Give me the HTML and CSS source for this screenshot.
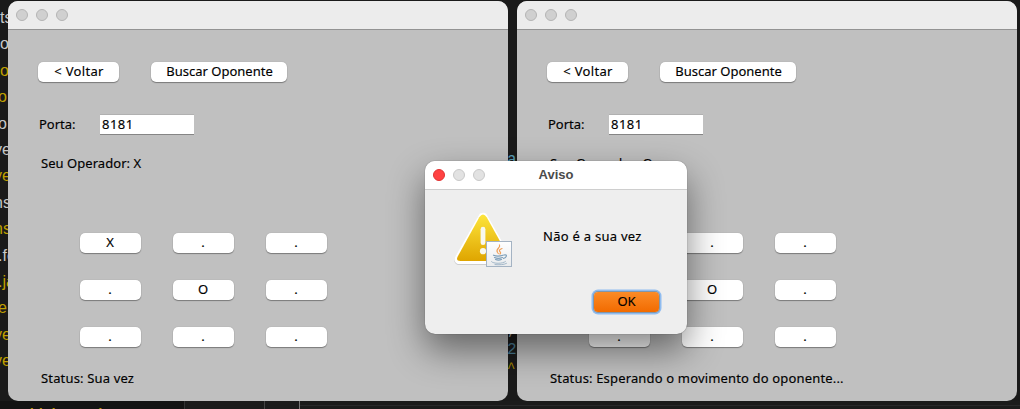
FILE: index.html
```
<!DOCTYPE html>
<html lang="pt-BR">
<head>
<meta charset="utf-8">
<title>Jogo da Velha</title>
<link rel="stylesheet" href="styles.css">
</head>
<body>
<div class="desktop">
  <div class="editor">
    <div class="line">ts</div>
    <div class="line">o</div>
    <div class="line gold">o</div>
    <div class="line gold near">o</div>
    <div class="line near">o</div>
    <div class="line far">ve</div>
    <div class="line gold far">ve</div>
    <div class="line far">ns</div>
    <div class="line gold far">ns</div>
    <div class="line near">.fe</div>
    <div class="line gold near">.ja</div>
    <div class="line gold near">er</div>
    <div class="line gold far">ve</div>
    <div class="line gold far">ve</div>
  </div>
  <div class="footer"><span class="tree">t Multiplayer Thr</span></div>
  <span class="code code-top">a</span>
  <span class="code code-mid">,</span>
  <span class="code code-low">2</span>
  <span class="code caret">^</span>

  <section class="window first">
    <header class="titlebar"><i></i><i></i><i></i></header>
    <div class="content">
      <div class="actions"><button class="btn back-btn">&lt; Voltar</button><button class="btn search">Buscar Oponente</button></div>
      <div class="port"><label>Porta:</label><input value="8181"></div>
      <p class="operator">Seu Operador: X</p>
      <div class="board">
        <button class="btn">X</button><button class="btn">.</button><button class="btn">.</button>
        <button class="btn">.</button><button class="btn">O</button><button class="btn">.</button>
        <button class="btn">.</button><button class="btn">.</button><button class="btn">.</button>
      </div>
      <p class="status">Status: Sua vez</p>
    </div>
  </section>

  <section class="window second">
    <header class="titlebar"><i></i><i></i><i></i></header>
    <div class="content">
      <div class="actions"><button class="btn back-btn">&lt; Voltar</button><button class="btn search">Buscar Oponente</button></div>
      <div class="port"><label>Porta:</label><input value="8181"></div>
      <p class="operator">Seu Operador: O</p>
      <div class="board">
        <button class="btn"></button><button class="btn">.</button><button class="btn">.</button>
        <button class="btn"></button><button class="btn">O</button><button class="btn">.</button>
        <button class="btn">.</button><button class="btn">.</button><button class="btn">.</button>
      </div>
      <p class="status">Status: Esperando o movimento do oponente...</p>
    </div>
  </section>

  <section class="dialog">
    <header class="titlebar"><i class="close"></i><i></i><i></i><h1>Aviso</h1></header>
    <div class="message">
      <svg class="warning" width="64" height="64" viewBox="0 0 64 64">
        <defs>
          <linearGradient id="gold" x1="0" y1="0" x2="0" y2="1"><stop offset="0" stop-color="#fde53c"/><stop offset="1" stop-color="#dfa500"/></linearGradient>
          <linearGradient id="tile" x1="0" y1="0" x2="0" y2="1"><stop offset="0" stop-color="#fff"/><stop offset="1" stop-color="#e9ebed"/></linearGradient>
        </defs>
        <path d="M33 8.500 9.200 50.300H56.800Z" fill="#bbb" stroke="#c4c4c4" stroke-width="10" stroke-linejoin="round" transform="translate(0 .8)" opacity=".75"/>
        <path d="M33 8.500 9.200 50.300H56.800Z" fill="#fff" stroke="#fff" stroke-width="9.600" stroke-linejoin="round"/>
        <path d="M29.300 8.300Q33 2.700 36.700 8.300L58.500 47.500Q60.500 52 55.500 52H10.500Q5.500 52 7.700 47.500Z" fill="url(#gold)"/>
        <path d="M33 20.200V33.700" stroke="#f8f8ee" stroke-width="4.800" stroke-linecap="round"/>
        <circle cx="33" cy="42.200" r="3.100" fill="#f8f8ee"/>
        <g transform="translate(0 -1)">
          <rect x="36.500" y="33.500" width="25" height="25" fill="url(#tile)" stroke="#a4b3c3"/>
          <g fill="none" stroke-linecap="round">
            <path d="M49.500 37c1.500 3-4.500 3.800-2 7.500l.8 1M52 40.500c-3 1.300-3.300 2.300-1.600 3.800.5.600 0 1.300-.5 1.700" stroke="#f0a058" stroke-width="1.200"/>
            <path d="M43.500 47.200c2 .8 7 .8 9.500 0M44.500 49.500c2 .9 5.500.9 8 0M45.500 51.500c2 .7 4 .7 6 0M54 47c4-1 2.500 3-.5 3.300" stroke="#7d9fba" stroke-width="1.200"/>
            <path d="M41.500 53.700c1.500 2.200 11.500 2.200 14-.2M45 56.600c4 .4 9 .2 11.500-1.200" stroke="#9bb1c4" stroke-width=".9"/>
          </g>
        </g>
      </svg>
      <p>Não é a sua vez</p>
    </div>
    <button class="ok">OK</button>
  </section>
</div>
</body>
</html>
```

FILE: styles.css
```
* { box-sizing: border-box; }
body { margin: 0; background: #1a1a1a; }
p, h1 { margin: 0; }
button, input { font: inherit; color: inherit; letter-spacing: inherit; border: 0; padding: 0; -webkit-text-stroke: inherit; }
.desktop {
  position: relative; width: 1020px; height: 409px; overflow: hidden;
  font: 13px/20px "Noto Sans", "Open Sans", sans-serif; color: #000;
}
.window, .message, .ok { -webkit-text-stroke: .15px #000; }
.editor { padding-top: 5px; font: 16px/26.400px "Liberation Sans", Arial, sans-serif; color: #c8c8c8; }
.line { width: 30px; height: 26.400px; margin-left: 0; white-space: nowrap; }
.gold { color: #c0a000; }
.near { margin-left: -2px; }
.far { margin-left: -6px; }
.footer {
  position: absolute; left: 0; top: 401px; width: 1020px; height: 8px; overflow: hidden;
  background:
    linear-gradient(#777, #777) 299px 0 / 1px 8px no-repeat,
    linear-gradient(#444, #444) 264px 0 / 1px 8px no-repeat,
    linear-gradient(#333, #333) 184px 0 / 1px 8px no-repeat,
    linear-gradient(#29292a, #29292a) 300px 4px / 720px 1px no-repeat,
    #1b1b1b;
}
.tree { display: block; width: 184px; height: 8px; padding-top: 4px; background: #131313; color: #b79600; font: bold 14.500px/18px "Liberation Sans", Arial, sans-serif; }
.code { position: absolute; left: 507px; font: 16px/18px "Liberation Mono", monospace; color: #5b9fb8; }
.code-top { top: 151px; }
.code-mid { top: 321px; color: #bbb; }
.code-low { top: 341px; color: #4a7c93; }
.caret { top: 359px; font-size: 14px; color: #a98b00; }

.window {
  position: absolute; top: 1px; width: 500px; height: 400px; overflow: hidden;
  border-radius: 10px; background: #c0c0c0;
}
.first { left: 8px; }
.second { left: 517px; }
.titlebar {
  display: flex; gap: 8px; align-items: center; height: 29px; padding-left: 8px;
  background: #ececec; border-bottom: 1px solid #939393;
}
.titlebar i { width: 12px; height: 12px; border-radius: 50%; background: #d0d0d0; border: 1px solid #b4b4b4; }
.content { padding: 32px 30px 0; }
.actions { display: flex; gap: 32px; height: 20px; }
.btn { height: 20px; padding: 0 1px 2px 0; line-height: 18px; border-radius: 5px; background: #fff; box-shadow: 0 1px 1px rgba(0, 0, 0, .35), 0 0 1px rgba(0, 0, 0, .25); text-align: center; }
.back-btn { width: 81px; padding-left: 2px; letter-spacing: .3px; }
.search { width: 136px; padding: 0 0 2px 1px; letter-spacing: 0; }
.port { display: flex; margin: 33px 0 0 1px; height: 19px; }
.port label { width: 61px; line-height: 19px; }
.port input { width: 94px; height: 19px; padding: 0 0 2px 2px; background: #fff; outline: 0; box-shadow: 0 1px 0 #858585, 0 -1px 0 #b0b0b0; letter-spacing: .5px; }
.operator { margin: 19px 0 0 3px; letter-spacing: .05px; }
.board { display: grid; grid-template-columns: repeat(3, 61px); grid-auto-rows: 20px; gap: 27px 32px; margin: 60px 0 0 42px; }
.status { margin: 21px 0 0 3px; white-space: nowrap; letter-spacing: .16px; }

.dialog {
  position: absolute; left: 425px; top: 161px; width: 262px; height: 173px;
  border-radius: 10px; background: #eee;
  box-shadow: 0 0 1px rgba(0, 0, 0, .6), 0 16px 36px rgba(0, 0, 0, .48);
}
.dialog .titlebar { position: relative; height: 29px; background: #fff; border-radius: 10px 10px 0 0; border-color: #cecece; }
.dialog i { background: #e2e2e2; border-color: #c9c9c9; }
.dialog .close { background: #ff4242; border-color: #e13232; }
.dialog h1 { position: absolute; left: 0; right: 0; top: 4px; text-align: center; font: bold 13px/20px "Liberation Sans", Arial, sans-serif; color: #4b4b4b; }
.message { display: flex; padding: 19px 0 0 25px; height: 101px; }
.message p { margin: 17px 0 0 29px; white-space: nowrap; letter-spacing: .27px; }
.ok {
  display: block; width: 65px; height: 20px; margin: 1px 0 0 169px; padding-bottom: 2px; line-height: 18px; border-radius: 4px;
  background: linear-gradient(#fb8b27, #f26b00); box-shadow: 0 0 0 1px #8396a8, 0 0 0 2.500px #8fbcf0;
}
```
